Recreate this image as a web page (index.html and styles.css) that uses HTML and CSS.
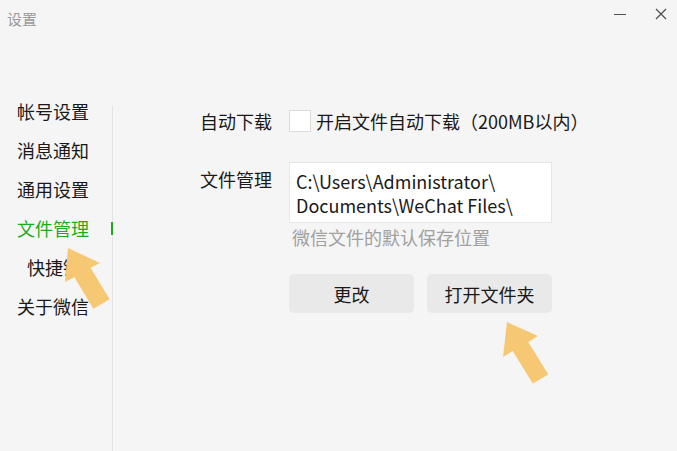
FILE: index.html
```html
<!DOCTYPE html>
<html lang="zh-CN">
<head>
    <meta charset="UTF-8">
    <meta name="viewport" content="width=device-width, initial-scale=1.0">
    <link rel="stylesheet" href="styles.css">
</head>
<body>
    <div class="window">
        <div class="titlebar">
            <span class="title">设置</span>
            <div class="controls">
                <span class="min-btn"></span>
                <svg class="close-btn" width="12" height="12" viewBox="0 0 12 12">
                    <path d="M1 1 L11 11 M11 1 L1 11" stroke="#505050" stroke-width="1.3" fill="none"/>
                </svg>
            </div>
        </div>
        <div class="main">
            <ul class="sidebar">
                <li>帐号设置</li>
                <li>消息通知</li>
                <li>通用设置</li>
                <li class="active">文件管理</li>
                <li class="indent">快捷键</li>
                <li>关于微信</li>
            </ul>
            <div class="content">
                <div class="row row-check">
                    <span class="label">自动下载</span>
                    <label class="check">
                        <span class="box"></span>
                        <span>开启文件自动下载（200MB以内）</span>
                    </label>
                </div>
                <div class="row row-path">
                    <span class="label">文件管理</span>
                    <div class="field">
                        <div class="path">C:\Users\Administrator\<br>Documents\WeChat Files\</div>
                        <div class="hint">微信文件的默认保存位置</div>
                        <div class="buttons">
                            <button>更改</button>
                            <button>打开文件夹</button>
                        </div>
                    </div>
                </div>
            </div>
        </div>
        <svg class="arrows" width="677" height="451" viewBox="0 0 677 451">
            <polygon fill="#f6c873" points="68,248 100,263 90.6,267.7 109.6,299.2 93.4,308.8 74.4,277.3 65,282"/>
            <polygon fill="#f6c873" points="507,322 538,336 528.3,341.9 548.3,374.4 532.7,383.6 512.7,351.1 503,357"/>
        </svg>
    </div>
</body>
</html>
```

FILE: styles.css
```css
body {
    margin: 0;
    padding: 0;
    background-color: #f5f5f5;
    font-family: "Noto Sans CJK SC", "Noto Sans", sans-serif;
    color: #191919;
}
.window {
    position: relative;
    width: 677px;
    height: 451px;
    overflow: hidden;
}
.titlebar {
    height: 40px;
    display: flex;
    justify-content: space-between;
    align-items: flex-start;
}
.title {
    margin: 8px 0 0 7px;
    font-size: 15px;
    line-height: 22px;
    color: #9a9a9a;
}
.controls {
    display: flex;
    align-items: center;
    margin: 8px 10px 0 0;
    gap: 29px;
}
.min-btn {
    display: block;
    width: 12px;
    height: 1px;
    background-color: #505050;
    margin-top: 1px;
}
.close-btn {
    display: block;
}
.main {
    display: flex;
    height: 411px;
}
.sidebar {
    list-style: none;
    margin: 0;
    padding: 52px 0 0 0;
    width: 112px;
    font-size: 18px;
}
.sidebar li {
    position: relative;
    height: 39px;
    line-height: 39px;
    padding-left: 17px;
}
.sidebar li.indent {
    padding-left: 27px;
}
.sidebar li.active {
    color: #1aad19;
}
.sidebar li.active::after {
    content: "";
    position: absolute;
    right: -1px;
    top: 13px;
    width: 2px;
    height: 13px;
    background-color: #1aad19;
}
.content {
    flex: 1;
    margin-top: 66px;
    border-left: 1px solid #e2e2e2;
    padding: 4px 0 0 87px;
    font-size: 18px;
}
.row {
    display: flex;
}
.label {
    width: 89px;
    flex-shrink: 0;
}
.row-check {
    align-items: center;
    height: 22px;
    margin-bottom: 30px;
}
.check {
    display: flex;
    align-items: center;
    gap: 5px;
}
.box {
    width: 20px;
    height: 20px;
    background-color: #fff;
    border: 1px solid #dcdcdc;
}
.row-path .label {
    padding-top: 5px;
    line-height: 24px;
}
.path {
    width: 249px;
    background-color: #fff;
    border: 1px solid #e6e6e6;
    padding: 6px 6px 5px 6px;
    line-height: 24px;
    font-size: 18px;
}
.hint {
    margin-top: 2px;
    padding-left: 3px;
    line-height: 24px;
    color: #a0a0a0;
}
.buttons {
    display: flex;
    gap: 13px;
    margin-top: 25px;
}
button {
    width: 125px;
    height: 39px;
    border: none;
    border-radius: 5px;
    background-color: #e9e9e9;
    color: #191919;
    font-family: inherit;
    font-size: 18px;
    padding: 0;
}
.arrows {
    position: absolute;
    left: 0;
    top: 0;
    pointer-events: none;
}
```
